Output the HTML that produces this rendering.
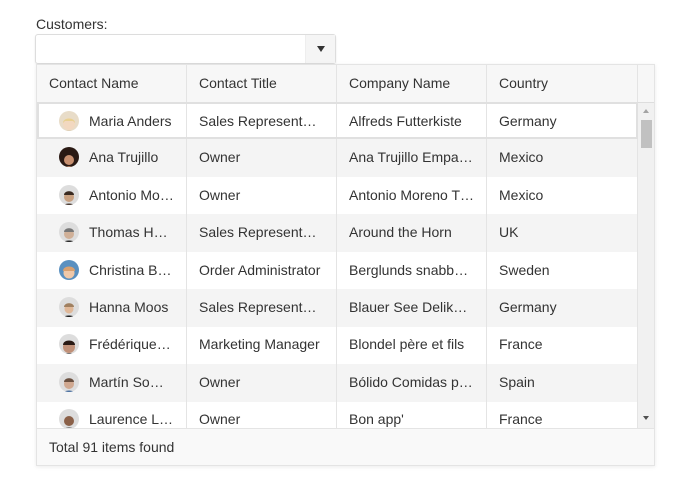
<!DOCTYPE html>
<html><head><style>
*{box-sizing:border-box;margin:0;padding:0}
body{width:687px;height:495px;background:#fff;font-family:"Liberation Sans",sans-serif;font-size:14px;color:#333;position:relative;overflow:hidden}
.lbl{position:absolute;left:36px;top:16px;font-size:14px;color:#333}
.inp{position:absolute;left:35px;top:34px;width:301px;height:30px;border:1px solid #ddd;border-radius:3px;background:#fff;box-shadow:0 1px 2px rgba(0,0,0,.08)}
.btn{position:absolute;right:0;top:0;width:30px;height:28px;background:#f5f5f5;border-left:1px solid #eee}
.btn:after{content:"";position:absolute;left:11px;top:11px;border-left:4px solid transparent;border-right:4px solid transparent;border-top:6px solid #333}
.pop{position:absolute;left:36px;top:64px;width:619px;height:402px;border:1px solid #e4e4e4;background:#fff;box-shadow:0 1px 4px rgba(0,0,0,.08);overflow:hidden}
.hdr{position:absolute;left:0;top:0;width:619px;height:38px;background:#f7f7f7;border-bottom:1px solid #ddd}
.c{position:absolute;top:0;height:100%;border-right:1px solid #e4e4e4;padding-left:12px;white-space:nowrap;overflow:hidden}
.hdr .c{line-height:37px}
.row{position:absolute;left:0;width:601px;height:38px}
.row .c{line-height:37px}
.g{background:#f4f4f4}
.av{position:absolute;left:22px;top:8px;width:20px;height:20px;border-radius:50%;overflow:hidden;background:#ddd}
.ft{position:absolute;left:0;top:363px;width:619px;height:39px;background:#f9f9f9;border-top:1px solid #e4e4e4;line-height:37px;padding-left:12px}
.sb{position:absolute;left:601px;top:38px;width:17px;height:325px;background:#f1f1f1}
.th{position:absolute;left:3px;top:17px;width:11px;height:28px;background:#c1c1c1}
.up{position:absolute;left:5px;top:6px;border-left:3.5px solid transparent;border-right:3.5px solid transparent;border-bottom:4px solid #a3a3a3}
.dn{position:absolute;left:5px;top:313px;border-left:3.5px solid transparent;border-right:3.5px solid transparent;border-top:4px solid #505050}
</style></head><body>
<div class="lbl">Customers:</div>
<div class="inp"><div class="btn"></div></div>
<div class="pop">
<div class="hdr">
<div class="c" style="left:0;width:150px">Contact Name</div>
<div class="c" style="left:150px;width:150px">Contact Title</div>
<div class="c" style="left:300px;width:150px">Company Name</div>
<div class="c" style="left:450px;width:151px">Country</div>
</div>

<div class="row" style="top:37px;height:37px"><div style="position:absolute;inset:0;border:2px solid #e0e0e0;z-index:2;pointer-events:none"></div>
<div class="c" style="left:0;width:150px;line-height:39px"><div class="av" style="background:#e8dcc8;top:9px"><svg width="20" height="20"><circle cx="10" cy="9" r="6" fill="#f2d8c0"/><path d="M3 20c0-6 14-6 14 0z" fill="#d8c4a8"/><path d="M4 8c0-6 12-6 12 0l-2-2H6z" fill="#e8d090"/></svg></div><span style="padding-left:40px">Maria Anders</span></div>
<div class="c" style="left:150px;width:150px;line-height:39px">Sales Represent…</div>
<div class="c" style="left:300px;width:150px;line-height:39px">Alfreds Futterkiste</div>
<div class="c" style="left:450px;width:151px;line-height:39px">Germany</div></div>

<div class="row g" style="top:74px"><div class="c" style="left:0;width:150px"><div class="av" style="background:#2a1a14"><svg width="20" height="20"><circle cx="10" cy="10" r="5" fill="#c89070"/><path d="M4 20c0-5 12-5 12 0z" fill="#c89070"/></svg></div><span style="padding-left:40px">Ana Trujillo</span></div><div class="c" style="left:150px;width:150px">Owner</div><div class="c" style="left:300px;width:150px">Ana Trujillo Empa…</div><div class="c" style="left:450px;width:151px">Mexico</div></div>

<div class="row" style="top:112px"><div class="c" style="left:0;width:150px"><div class="av"><svg width="20" height="20"><circle cx="10" cy="9" r="5" fill="#c8a080"/><path d="M5 7c0-5 10-5 10 0z" fill="#3a2a20"/><path d="M3 20c0-6 14-6 14 0z" fill="#4a3a30"/></svg></div><span style="padding-left:40px">Antonio Mo…</span></div><div class="c" style="left:150px;width:150px">Owner</div><div class="c" style="left:300px;width:150px">Antonio Moreno T…</div><div class="c" style="left:450px;width:151px">Mexico</div></div>

<div class="row g" style="top:149px"><div class="c" style="left:0;width:150px"><div class="av"><svg width="20" height="20"><circle cx="10" cy="9" r="5" fill="#d0b098"/><path d="M5 7c0-5 10-5 10 0z" fill="#777"/><path d="M2 20c0-6 16-6 16 0z" fill="#222"/></svg></div><span style="padding-left:40px">Thomas H…</span></div><div class="c" style="left:150px;width:150px">Sales Represent…</div><div class="c" style="left:300px;width:150px">Around the Horn</div><div class="c" style="left:450px;width:151px">UK</div></div>

<div class="row" style="top:187px"><div class="c" style="left:0;width:150px"><div class="av" style="background:#5a90c0"><svg width="20" height="20"><circle cx="10" cy="10" r="5.5" fill="#f0c8a8"/><path d="M4 8c0-6 12-6 12 0z" fill="#d8a070"/></svg></div><span style="padding-left:40px">Christina B…</span></div><div class="c" style="left:150px;width:150px">Order Administrator</div><div class="c" style="left:300px;width:150px">Berglunds snabb…</div><div class="c" style="left:450px;width:151px">Sweden</div></div>

<div class="row g" style="top:224px"><div class="c" style="left:0;width:150px"><div class="av"><svg width="20" height="20"><circle cx="10" cy="9" r="4.5" fill="#e0b898"/><path d="M5 7c0-5 10-5 10 0z" fill="#a08060"/><path d="M2 20c0-6 16-6 16 0z" fill="#1a1a1a"/></svg></div><span style="padding-left:40px">Hanna Moos</span></div><div class="c" style="left:150px;width:150px">Sales Represent…</div><div class="c" style="left:300px;width:150px">Blauer See Delik…</div><div class="c" style="left:450px;width:151px">Germany</div></div>

<div class="row" style="top:261px"><div class="c" style="left:0;width:150px"><div class="av"><svg width="20" height="20"><circle cx="10" cy="10" r="6" fill="#c09078"/><path d="M4 8c0-6 12-6 12 0z" fill="#2a1a14"/><path d="M3 20c0-5 14-5 14 0z" fill="#555"/></svg></div><span style="padding-left:40px">Frédérique…</span></div><div class="c" style="left:150px;width:150px">Marketing Manager</div><div class="c" style="left:300px;width:150px">Blondel père et fils</div><div class="c" style="left:450px;width:151px">France</div></div>

<div class="row g" style="top:299px"><div class="c" style="left:0;width:150px"><div class="av"><svg width="20" height="20"><circle cx="10" cy="9" r="5" fill="#d0a890"/><path d="M5 7c0-5 10-5 10 0z" fill="#6a5040"/><path d="M3 20c0-6 14-6 14 0z" fill="#4a70a0"/></svg></div><span style="padding-left:40px">Martín So…</span></div><div class="c" style="left:150px;width:150px">Owner</div><div class="c" style="left:300px;width:150px">Bólido Comidas p…</div><div class="c" style="left:450px;width:151px">Spain</div></div>

<div class="row" style="top:336px"><div class="c" style="left:0;width:150px"><div class="av"><svg width="20" height="20"><circle cx="10" cy="9" r="5" fill="#8a6048"/><path d="M3 20c0-6 14-6 14 0z" fill="#333"/></svg></div><span style="padding-left:40px">Laurence L…</span></div><div class="c" style="left:150px;width:150px">Owner</div><div class="c" style="left:300px;width:150px">Bon app'</div><div class="c" style="left:450px;width:151px">France</div></div>

<div class="sb"><div class="up"></div><div class="th"></div><div class="dn"></div></div>
<div class="ft">Total 91 items found</div>
</div>
</body></html>
